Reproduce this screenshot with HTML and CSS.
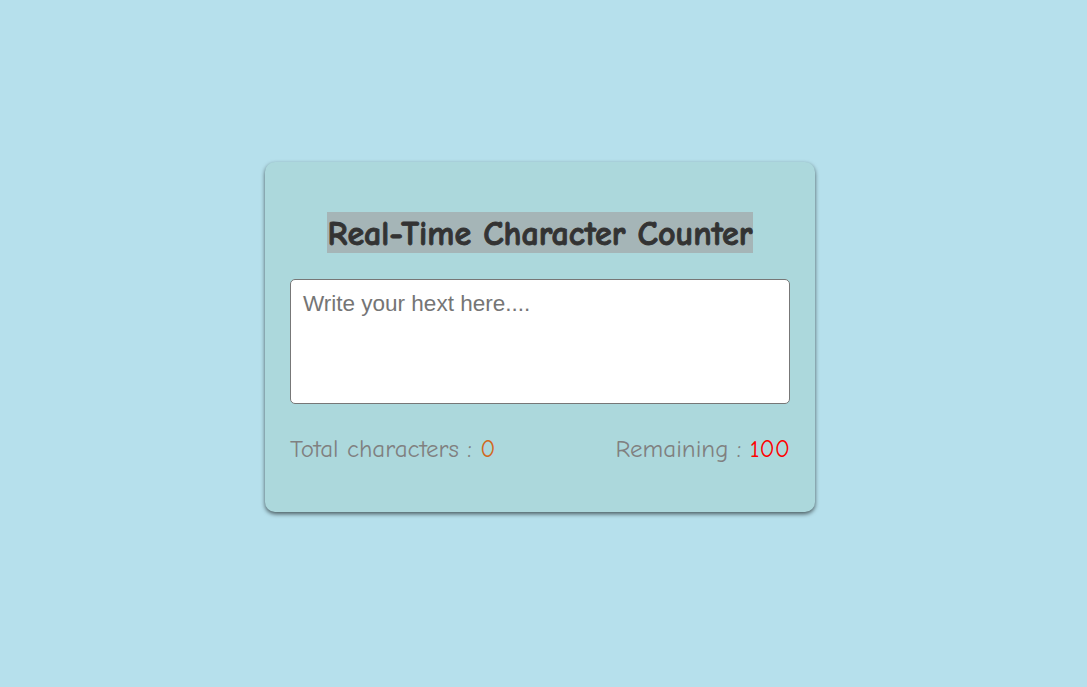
FILE: index.html
```html
<!DOCTYPE html>
<html lang="en">
<head>
<meta charset="utf-8">
<title>Real-Time Character Counter</title>
<link rel="stylesheet" href="styles.css">
</head>
<body>
<div class="card">
  <div class="title-row"><h1 class="title">Real-Time Character Counter</h1></div>
  <textarea class="input" placeholder="Write your hext here...."></textarea>
  <div class="stats">
    <p class="stat">Total characters : <span class="total">0</span></p>
    <p class="stat">Remaining : <span class="remaining">100</span></p>
  </div>
</div>
</body>
</html>
```
FILE: styles.css
```css
html, body {
  margin: 0;
  padding: 0;
}
body {
  background: #b6e0ec;
  height: 100vh;
  display: flex;
  align-items: center;
  justify-content: center;
  padding: 0 7px 13px 0;
  box-sizing: border-box;
  font-family: "Comic Sans MS", "Comic Neue", "DejaVu Sans", sans-serif;
}
.card {
  width: 550px;
  height: 350px;
  box-sizing: border-box;
  background: #acd8dc;
  border-radius: 10px;
  padding: 50px 25px 0;
  box-shadow: 0 2px 4px rgba(0, 0, 0, 0.6);
  display: flex;
  flex-direction: column;
}
.title-row {
  display: flex;
  justify-content: center;
  margin-bottom: 26px;
}
.title {
  margin: 0;
  background: #a5b5b7;
  color: #333;
  font-size: 34px;
  font-weight: 700;
  -webkit-text-stroke: 0.9px #333;
  line-height: 38px;
  height: 38px;
  padding: 3px 1px 0;
  white-space: nowrap;
}
.input {
  width: 500px;
  height: 125px;
  box-sizing: border-box;
  border: 1px solid #777;
  border-radius: 5px;
  padding: 11px 12px;
  font-family: "Liberation Sans", Arial, sans-serif;
  font-size: 22.5px;
  resize: none;
  background: #fff;
  outline: none;
}
.input::placeholder {
  color: #757575;
}
.stats {
  display: flex;
  justify-content: space-between;
  margin-top: 30px;
}
.stat {
  margin: 0;
  font-size: 25px;
  color: #808080;
  line-height: 30px;
  white-space: nowrap;
}
.total {
  color: #d2691e;
}
.remaining {
  color: #ff0000;
}
```
